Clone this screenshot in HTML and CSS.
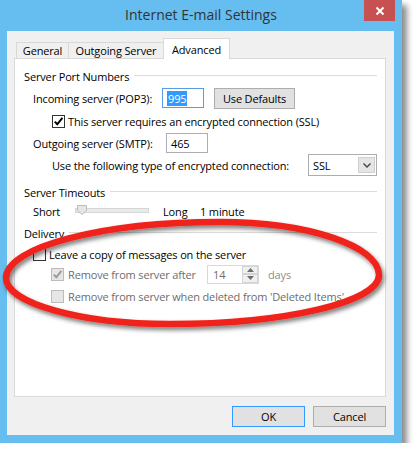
FILE: index.html
```html
<!DOCTYPE html>
<html lang="en">
<head>
  <meta charset="UTF-8">
  <title>Internet E-mail Settings</title>
  <link rel="stylesheet" href="styles.css">
</head>
<body>

  <div class="window">
    <div class="titlebar">
      <span class="title">Internet E-mail Settings</span>
      <span class="close">
        <svg width="10" height="10" viewBox="0 0 10 10"><path d="M1.5 1.5 L8.5 8.5 M8.5 1.5 L1.5 8.5" stroke="#fff" stroke-width="2"/></svg>
      </span>
    </div>

    <div class="client">
      <div class="tabs">
        <div class="tab tab-general">General</div>
        <div class="tab tab-outgoing">Outgoing Server</div>
        <div class="tab tab-advanced active">Advanced</div>
      </div>

      <div class="panel">
        <div class="group group-ports"><span>Server Port Numbers</span><span class="rule"></span></div>

        <div class="row row-incoming">
          <span class="label label-incoming">Incoming server (POP3):</span>
          <span class="field focused"><span class="selected">995</span></span>
          <span class="button button-defaults">Use Defaults</span>
        </div>

        <div class="row row-ssl">
          <span class="check">
            <svg viewBox="0 0 11 11"><path d="M1.8 5.6 L4.3 8.3 L9.4 1.9"/></svg>
          </span>
          <span>This server requires an encrypted connection (SSL)</span>
        </div>

        <div class="row row-outgoing">
          <span class="label label-outgoing">Outgoing server (SMTP):</span>
          <span class="field">465</span>
        </div>

        <div class="row row-encryption">
          <span>Use the following type of encrypted connection:</span>
          <span class="select">
            SSL
            <span class="select-arrow">
              <svg width="8" height="5" viewBox="0 0 8 5"><path d="M0.5 0.5 L4 4 L7.5 0.5" fill="none" stroke="#444" stroke-width="1.4"/></svg>
            </span>
          </span>
        </div>

        <div class="group group-timeouts"><span>Server Timeouts</span><span class="rule"></span></div>

        <div class="row row-timeout">
          <span class="label label-short">Short</span>
          <svg class="slider" width="74" height="12" viewBox="0 0 74 12">
            <rect x="0.5" y="3.5" width="73" height="4" fill="#e7eaea" stroke="#d6d6d6"/>
            <path d="M2.5 0.5 H11.5 V5.5 L7 9.5 L2.5 5.5 Z" fill="#e6e6e6" stroke="#bdbdbd"/>
          </svg>
          <span class="label label-long">Long</span>
          <span>1 minute</span>
        </div>

        <div class="group group-delivery"><span>Delivery</span><span class="rule"></span></div>

        <div class="row row-leave">
          <span class="check unchecked"></span>
          <span>Leave a copy of messages on the server</span>
        </div>

        <div class="row row-sub row-after disabled">
          <span class="check">
            <svg viewBox="0 0 11 11"><path d="M1.8 5.6 L4.3 8.3 L9.4 1.9"/></svg>
          </span>
          <span class="label label-after">Remove from server after</span>
          <span class="spinner">
            <span class="spinner-value">14</span>
            <span class="spinner-buttons">
              <span class="spin">
                <svg width="7" height="4" viewBox="0 0 7 4"><path d="M0 4 L3.5 0 L7 4 Z"/></svg>
              </span>
              <span class="spin">
                <svg width="7" height="4" viewBox="0 0 7 4"><path d="M0 0 L3.5 4 L7 0 Z"/></svg>
              </span>
            </span>
          </span>
          <span class="days">days</span>
        </div>

        <div class="row row-sub row-deleted disabled">
          <span class="check unchecked"></span>
          <span>Remove from server when deleted from 'Deleted Items'</span>
        </div>
      </div>

      <div class="actions">
        <span class="button button-dialog default">OK</span>
        <span class="button button-dialog">Cancel</span>
      </div>
    </div>

    <!-- red marker drawn over the Delivery options -->
    <svg class="marker" width="402" height="443" viewBox="0 0 402 443">
      <defs>
        <filter id="marker-shadow" x="-10%" y="-30%" width="120%" height="160%">
          <feDropShadow dx="2" dy="3" stdDeviation="2" flood-color="#000" flood-opacity="0.5"/>
        </filter>
      </defs>
      <path d="M6 278 C6 247 102 222 220 222 C308 222 379 246 379 275 C379 302 285 324 170 324 C80 324 6 303 6 278 Z"
            fill="none" stroke="#f0241a" stroke-width="6.5" filter="url(#marker-shadow)"/>
    </svg>
  </div>

</body>
</html>
```

FILE: styles.css
```css
body {
  margin: 0;
  background: #fff;
  font-family: "Open Sans", "Noto Sans", sans-serif;
  font-size: 11px;
  letter-spacing: -0.15px;
  color: #000;
}

.window {
  position: relative;
  width: 402px;
  height: 443px;
  background: #65bdf0;
  box-shadow: 5px 5px 6px rgba(0, 0, 0, 0.45);
  display: flex;
  flex-direction: column;
}

/* title bar */
.titlebar {
  flex: none;
  height: 31px;
  display: grid;
  grid-template-columns: 38px 1fr 38px;
}
.title {
  grid-column: 2;
  text-align: center;
  font-size: 14px;
  letter-spacing: 0;
  line-height: 30px;
  color: #333;
}
.close {
  width: 31px;
  height: 21px;
  background: #c75050;
  display: flex;
  align-items: center;
  justify-content: center;
}

.client {
  flex: 1;
  margin: 0 8px 8px 7px;
  padding: 7px 8px 0 7px;
  background: #f0f0f0;
  display: flex;
  flex-direction: column;
}

/* tabs */
.tabs {
  height: 20px;
  padding-left: 2px;
  display: flex;
  align-items: flex-end;
}
.tab {
  box-sizing: border-box;
  height: 16px;
  border: 1px solid #d9d9d9;
  border-bottom: none;
  background: #f0f0f0;
  display: flex;
  align-items: center;
  justify-content: center;
}
.tab + .tab {
  margin-left: -1px;
}
.tab-general { width: 53px; }
.tab-outgoing { width: 96px; }
.tab-advanced { width: 67px; }
.tab.active {
  position: relative;
  z-index: 1;
  height: 21px;
  margin-bottom: -1px;
  background: #fff;
}

.panel {
  box-sizing: border-box;
  height: 339px;
  padding: 8px 8px 0 9px;
  border: 1px solid #d9d9d9;
  background: #fff;
  display: flex;
  flex-direction: column;
}

/* group headings with a line after them */
.group {
  height: 18px;
  display: flex;
  align-items: center;
}
.rule {
  flex: 1;
  height: 1px;
  margin: 0 0 2px 5px;
  background: #dcdcdc;
}
.group-timeouts { margin-top: 6px; }
.group-delivery { margin-top: 4px; }

.row {
  display: flex;
  align-items: center;
  flex: none;
}
.label {
  flex: none;
}

.row-incoming { height: 22px; margin-top: 2px; padding-left: 9px; }
.row-ssl { height: 24px; padding-left: 28px; }
.row-outgoing { height: 20px; padding-left: 9px; }
.row-encryption { height: 24px; padding-left: 28px; }
.row-timeout { height: 18px; margin-top: 1px; padding-left: 9px; }
.row-leave { height: 20px; margin-top: 2px; padding-left: 9px; }
.row-after { height: 20px; }
.row-deleted { height: 20px; margin-top: 2px; }
.row-sub { padding-left: 27px; }

.label-incoming { width: 129px; }
.label-outgoing { width: 133px; }
.label-short { width: 42px; }
.label-long { width: 37px; margin-left: 14px; }
.label-after { width: 139px; }

/* text boxes */
.field {
  box-sizing: border-box;
  width: 42px;
  height: 20px;
  padding-left: 4px;
  border: 1px solid #abadb3;
  background: #fff;
  display: flex;
  align-items: center;
}
.field.focused {
  border-color: #569de5;
}
.selected {
  background: #3399ff;
  color: #fff;
  padding: 0 1px;
}

.button {
  box-sizing: border-box;
  height: 21px;
  border: 1px solid #adadad;
  background: #e1e1e1;
  display: flex;
  align-items: center;
  justify-content: center;
}
.button-defaults {
  width: 81px;
  margin-left: 10px;
}

/* check boxes */
.check {
  box-sizing: border-box;
  width: 13px;
  height: 13px;
  margin-right: 3px;
  border: 1px solid #333;
  background: #fff;
  flex: none;
}
.check svg {
  display: block;
  width: 11px;
  height: 11px;
  fill: none;
  stroke: #000;
  stroke-width: 2;
}
.row-sub .check {
  margin-right: 4px;
}
.disabled {
  color: #6d6d6d;
}
.disabled .check {
  border-color: #bcbcbc;
  background: #e6e6e6;
}
.disabled .check svg {
  stroke: #9c9c9c;
}

/* drop down */
.select {
  box-sizing: border-box;
  width: 69px;
  height: 22px;
  margin-left: auto;
  padding-left: 4px;
  border: 1px solid #abadb3;
  background: #fff;
  display: flex;
  align-items: center;
}
.select-arrow {
  box-sizing: border-box;
  width: 17px;
  height: 16px;
  margin-left: auto;
  margin-right: 1px;
  border: 1px solid #cfcfcf;
  background: #e5e5e5;
  display: flex;
  align-items: center;
  justify-content: center;
}

.slider {
  display: block;
}

/* number spinner */
.spinner {
  box-sizing: border-box;
  width: 52px;
  height: 19px;
  border: 1px solid #d9d9d9;
  background: #fff;
  display: flex;
  align-items: center;
}
.spinner-value {
  padding-left: 5px;
}
.spinner-buttons {
  margin-left: auto;
  width: 16px;
  height: 17px;
  display: flex;
  flex-direction: column;
}
.spin {
  box-sizing: border-box;
  flex: 1;
  border: 1px solid #d4d4d4;
  background: #f0f0f0;
  display: flex;
  align-items: center;
  justify-content: center;
}
.spin svg {
  fill: #6d6d6d;
}
.days {
  margin-left: 9px;
  color: #8d8d8d;
}

/* dialog buttons */
.actions {
  margin-top: 9px;
  display: flex;
  justify-content: flex-end;
  gap: 8px;
}
.button-dialog {
  width: 73px;
}
.button.default {
  border-color: #3399ff;
}

.marker {
  position: absolute;
  left: 0;
  top: 0;
  pointer-events: none;
}
```
